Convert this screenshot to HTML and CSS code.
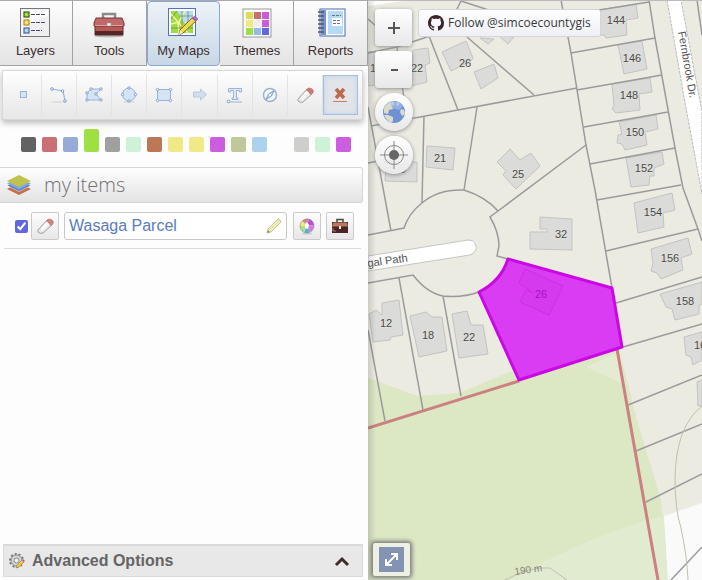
FILE: index.html
```html
<!DOCTYPE html>
<html lang="en">
<head>
<meta charset="utf-8">
<meta name="viewport" content="width=device-width, initial-scale=1">
<title>My Maps</title>
<link rel="stylesheet" href="styles.css">
</head>
<body>
<aside class="panel">
  <nav class="tabs">
    <button class="tab" type="button">
      <svg width="32" height="32" viewBox="0 0 32 32"><rect x="1.5" y="1.5" width="29" height="28" fill="#f0f0f2" stroke="#777" /><path d="M3 3h26v6Q14 13 3 27z" fill="#fff" opacity=".8"/><g stroke-width="1.2"><rect x="5" y="5" width="5" height="5" fill="#9fe03c" stroke="#3c5a1c"/><rect x="5" y="13" width="5" height="5" fill="#f6e67c" stroke="#b58a1c"/><rect x="5" y="21" width="5" height="5" fill="#b5d8f7" stroke="#45649c"/></g><path d="M12 7.500h15M12 15.500h15M12 23.500h11" stroke="#454b66" stroke-dasharray="4 1"/></svg>
      <span>Layers</span>
    </button>
    <button class="tab" type="button">
      <svg width="32" height="32" viewBox="0 0 32 32"><ellipse cx="16" cy="29" rx="15" ry="1.500" fill="#bbb"/><path d="M10 11V7h12v4" fill="none" stroke="#8b8b8f" stroke-width="2.500"/><path d="M3 11h26l2 5v3H1v-3z" fill="#c0696a" stroke="#713738"/><path d="M2 19h28v9H2z" fill="#b65a58" stroke="#622c2c"/><path d="M2 24h28v4H2z" fill="#552527"/><path d="M2 18.500h28" stroke="#e5a09b"/><rect x="14" y="16" width="4" height="3" fill="#eee" stroke="#999" stroke-width=".5"/></svg>
      <span>Tools</span>
    </button>
    <button class="tab tab-active" type="button">
      <svg width="32" height="32" viewBox="0 0 32 32"><rect x="1.500" y="1.500" width="27" height="27" fill="#fff" stroke="#5471b4"/><path d="M4 4h22v22H4z" fill="#9bdb45"/><path d="M10 4h16v9l-8 4z" fill="#b8dcf6"/><path d="M4 7l7 8 1 11M4 17l8-2 6-11M11 15l10 11" fill="none" stroke="#f5f2a0" stroke-width="1.500"/><path d="M4 12l6-8M15 4v22M21 4v14M4 21h22M12 9h14" fill="none" stroke="#638b52" stroke-width=".7"/><path d="M12 28l1-5L25 11l4 3-13 12z" fill="#f0d84b" stroke="#7c6829"/><path d="M25 11l3-2 3 3-2 2z" fill="#c45cce" stroke="#80558e" stroke-width=".6"/><path d="M12 28l1-5 3 3z" fill="#f9e7ba"/></svg>
      <span>My Maps</span>
    </button>
    <button class="tab" type="button">
      <svg width="32" height="32" viewBox="0 0 32 32"><rect x="2" y="2" width="28" height="28" fill="#fff" stroke="#999"/><path d="M5 5h7v7H5z" fill="#dfdb52"/><path d="M13 5h7v7h-7z" fill="#ca6d70"/><path d="M21 5h7v7h-7zM21 13h7v7h-7z" fill="#cb5bdc"/><path d="M5 13h7v7H5z" fill="#efe981"/><path d="M13 13h7v7h-7z" fill="#eee"/><path d="M5 21h7v7H5z" fill="#9be044"/><path d="M13 21h7v7h-7z" fill="#95b9e8"/><path d="M21 21h7v7h-7z" fill="#6268df"/></svg>
      <span>Themes</span>
    </button>
    <button class="tab" type="button">
      <svg width="32" height="32" viewBox="0 0 32 32"><rect x="5" y="2" width="25" height="27" fill="#fff" stroke="#486ab5"/><path d="M6 3h5v25H6z" fill="#7193d5"/><path d="M13 4h15v23H13z" fill="#b4daf4"/><path d="M17 11h10v8H17z" fill="#fff"/><path d="M17 8.500h9M18 13.500h8M18 16.500h8" stroke="#69748c" stroke-dasharray="3 1"/><path d="M3 5h6M3 9h6M3 13h6M3 17h6M3 21h6M3 25h6" stroke="#555" stroke-width="1.500"/></svg>
      <span>Reports</span>
    </button>
  </nav>

  <div class="toolbar">
    <button class="tool" type="button" aria-label="Point"><svg width="20" height="20" viewBox="0 0 20 20"><rect x="6.500" y="6.500" width="6" height="6" fill="#d5e5f5" stroke="#9cb2dc"/></svg></button>
    <button class="tool" type="button" aria-label="Line"><svg width="20" height="20" viewBox="0 0 20 20"><ellipse cx="9" cy="17" rx="7" ry="1" fill="#ddd"/><path d="M3 4l11 2 2 10" fill="none" stroke="#9cb2dc" stroke-width="1.200"/><g fill="#fff" stroke="#819fd2"><circle cx="3" cy="4" r="1.300"/><circle cx="13.500" cy="6" r="1.300"/><circle cx="16" cy="16" r="1.300"/></g></svg></button>
    <button class="tool" type="button" aria-label="Polygon"><svg width="20" height="20" viewBox="0 0 20 20"><path d="M7 4h10l-5 5 5 6H3V8z" fill="#d5e4f2" stroke="#9cb2dc"/><g fill="#fff" stroke="#819fd2"><circle cx="7" cy="4" r="1.200"/><circle cx="17" cy="4" r="1.200"/><circle cx="12" cy="9" r="1.200"/><circle cx="17" cy="15" r="1.200"/><circle cx="3" cy="15" r="1.200"/><circle cx="3" cy="8" r="1.200"/></g></svg></button>
    <button class="tool" type="button" aria-label="Circle"><svg width="20" height="20" viewBox="0 0 20 20"><ellipse cx="10" cy="17" rx="6" ry="1" fill="#ddd"/><circle cx="10" cy="9.500" r="6.500" fill="#d5e4f2" stroke="#9cb2dc"/><g fill="#fff" stroke="#819fd2"><circle cx="10" cy="3" r="1.200"/><circle cx="16.500" cy="9.500" r="1.200"/><circle cx="10" cy="16" r="1.200"/><circle cx="3.500" cy="9.500" r="1.200"/></g></svg></button>
    <button class="tool" type="button" aria-label="Rectangle"><svg width="20" height="20" viewBox="0 0 20 20"><path d="M3.500 4.500h13v11h-13z" fill="#d5e4f2" stroke="#9cb2dc"/><g fill="#fff" stroke="#819fd2"><circle cx="3.500" cy="4.500" r="1.200"/><circle cx="16.500" cy="4.500" r="1.200"/><circle cx="16.500" cy="15.500" r="1.200"/><circle cx="3.500" cy="15.500" r="1.200"/></g></svg></button>
    <button class="tool" type="button" aria-label="Arrow"><svg width="20" height="20" viewBox="0 0 20 20"><path d="M3.500 7h7V4l6 5.500-6 5.500v-3h-7z" fill="#d1dfec" stroke="#b9cae0"/></svg></button>
    <button class="tool" type="button" aria-label="Text"><svg width="20" height="20" viewBox="0 0 20 20"><path d="M3.500 7V3.500h13V7h-2V5.500h-3V13H13v1.500H7V13h1.500V5.500h-3V7z" fill="#dce9f6" stroke="#9cb2dc"/><path d="M3 17h14" stroke="#9cb2dc"/><circle cx="3.500" cy="16.500" r="1.300" fill="#fff" stroke="#819fd2"/></svg></button>
    <button class="tool" type="button" aria-label="Compass"><svg width="20" height="20" viewBox="0 0 20 20"><circle cx="10" cy="10" r="6.500" fill="#f5f8fc" stroke="#9db4d7" stroke-width="1.500"/><path d="M14 5.500L11.500 11 6 14.500 8.500 9z" fill="#c2d4ec" stroke="#829fcc"/><circle cx="10" cy="10" r="1" fill="#fff"/></svg></button>
    <button class="tool" type="button" aria-label="Eraser"><svg width="20" height="20" viewBox="0 0 20 20"><path d="M3 14L12 4q2-2 5 0t0 5l-9 8q-3 1-5-1z" fill="#e9e9e9" stroke="#a0a0a0"/><path d="M11 5l1-1q2-2 5 0t0 5l-1 1z" fill="#ce7775"/><path d="M6 12l6-6 2 2-7 7z" fill="#fff"/></svg></button>
    <button class="tool tool-active" type="button" aria-label="Clear drawing"><svg width="20" height="20" viewBox="0 0 20 20"><path d="M6 4l8 9M14 4l-8 9" stroke="#bd6849" stroke-width="3.500"/><path d="M3 16.500h14" stroke="#d17a56"/></svg></button>
  </div>

  <div class="swatches">
    <button class="swatch dark" type="button" aria-label="Dark grey"></button>
    <button class="swatch red" type="button" aria-label="Red"></button>
    <button class="swatch blue" type="button" aria-label="Blue"></button>
    <button class="swatch green chosen" type="button" aria-label="Green"></button>
    <button class="swatch grey" type="button" aria-label="Grey"></button>
    <button class="swatch mint" type="button" aria-label="Mint"></button>
    <button class="swatch brown" type="button" aria-label="Brown"></button>
    <button class="swatch yellow" type="button" aria-label="Yellow"></button>
    <button class="swatch yellow" type="button" aria-label="Light yellow"></button>
    <button class="swatch purple" type="button" aria-label="Purple"></button>
    <button class="swatch olive" type="button" aria-label="Olive"></button>
    <button class="swatch sky" type="button" aria-label="Sky blue"></button>
    <button class="swatch silver recent" type="button" aria-label="Recent silver"></button>
    <button class="swatch mint" type="button" aria-label="Recent mint"></button>
    <button class="swatch purple" type="button" aria-label="Recent purple"></button>
  </div>

  <h1 class="heading">
    <svg width="26" height="22" viewBox="0 0 26 22"><path d="M1 15l12-6 12 6-12 6z" fill="#c66f4b"/><path d="M1 11.500l12-6 12 6-12 6z" fill="#5c7ec0" stroke="#fff" stroke-width=".5"/><path d="M1 9.500l12-6 12 6-12 6z" fill="#82a9dc"/><path d="M1 7l12-6 12 6-12 6z" fill="#bfc34b"/></svg>
    <span>my items</span>
  </h1>

  <div class="item">
    <input class="item-check" type="checkbox" checked aria-label="Show Wasaga Parcel">
    <button class="square" type="button" aria-label="Delete item"><svg width="20" height="20" viewBox="0 0 20 20"><path d="M3 14L12 4q2-2 5 0t0 5l-9 8q-3 1-5-1z" fill="#e9e9e9" stroke="#a0a0a0"/><path d="M11 5l1-1q2-2 5 0t0 5l-1 1z" fill="#ce8280"/><path d="M6 12l6-6 2 2-7 7z" fill="#fff"/></svg></button>
    <label class="name">
      <input class="name-input" type="text" value="Wasaga Parcel" aria-label="Item name">
      <svg width="16" height="16" viewBox="0 0 16 16"><path d="M1 15l1-4L12 1q2 0 3 3L5 14z" fill="#eef0b4" stroke="#c2c49a"/><path d="M4 12l9-9" stroke="#dde2a8"/><path d="M1 15l1-3 2 2z" fill="#8b8b78"/></svg>
    </label>
    <button class="square" type="button" aria-label="Item colour"><svg width="18" height="18" viewBox="0 0 18 18"><ellipse cx="9" cy="16.500" rx="5" ry="1" fill="#ccc"/><circle cx="9" cy="9" r="7" fill="#fff"/><path d="M9 9L4 4q3-3 7-2z" fill="#d08a8b"/><path d="M9 9l2-7q4 1 5 6z" fill="#b74ee0"/><path d="M9 9l7-1q0 5-4 7z" fill="#d978db"/><path d="M9 9l3 6q-3 2-6 0z" fill="#58afd6"/><path d="M9 9l-3 6q-4-2-4-6z" fill="#a6e47c"/><path d="M9 9H2q0-3 2-5z" fill="#edea79"/><path d="M9 5l2 3-1 4-3-1V7z" fill="#fff"/><circle cx="9" cy="9" r="7" fill="none" stroke="#8c7d9c" stroke-width=".6"/></svg></button>
    <button class="square" type="button" aria-label="Item tools"><svg width="18" height="18" viewBox="0 0 18 18"><path d="M6 5V2.500h6V5" fill="none" stroke="#444" stroke-width="1.500"/><path d="M1 5h16v11H1z" fill="#4a2527"/><path d="M2 5.500h14l1 4H1z" fill="#be765c"/><path d="M2 11v3h3" fill="none" stroke="#bb7659"/><rect x="8" y="9" width="2" height="3" fill="#eee"/></svg></button>
  </div>

  <button class="advanced" type="button">
    <svg width="18" height="18" viewBox="0 0 18 18"><circle cx="8.500" cy="8.500" r="6.500" fill="none" stroke="#777" stroke-width="2" stroke-dasharray="2 2"/><circle cx="8.500" cy="8.500" r="5.500" fill="#d5d5d5" stroke="#888"/><circle cx="8.500" cy="8.500" r="2.500" fill="#eee" stroke="#888"/><path d="M8 16l1-3 5-5 2 2-5 5z" fill="#edc643" stroke="#9f8040" stroke-width=".6"/><path d="M14 8l1-1 2 2-1 1z" fill="#b45bc2"/></svg>
    <span class="advanced-label">Advanced Options</span>
    <svg width="16" height="12" viewBox="0 0 16 12"><path d="M2 10l6-6 6 6" fill="none" stroke="#432b2d" stroke-width="3"/></svg>
  </button>
</aside>

<main class="map">
  <svg class="map-canvas" viewBox="368 0 334 580" preserveAspectRatio="xMinYMin slice">
    <rect x="368" width="334" height="580" fill="#ecebe2"/>
    <path d="M368 378L417 396 460 393 519 368 619 349 637 420 661 500 668 580H368z" fill="#dce7c4"/>
    <path d="M586 367L620 351 625 385z" fill="#e4ebd2"/>
    <path d="M510 580Q590 535 664 515L668 580z" fill="#e1ebd0"/>
    <path d="M664 516L702 503V580H668z" fill="#fafafa"/>
    <path d="M368 0h42L368 6z" fill="#fff"/>
    <path d="M667 0h14l21 112v82L684 97z" fill="#fff" stroke="#bbb" stroke-dasharray="3 1"/>
    <path d="M368 256L468 240q7 0 8 6t-6 9L368 271z" fill="#fff" stroke="#c5c5c3"/>
    <g class="building">
      <path d="M442 52l24-11 7 17-2 3-20 10zM474 72l20-8 4 14-17 11zM413 50l15-2 2 15-5 2 2 17-16 4zM368 52l8-1v34l-8 1zM386 162h31v20l-32-1zM427 146l28 2-2 22-27-3z"/>
      <path d="M497 162l13-13 10 11 11-7 9 13-24 23-13-14 3-4zM530 232h17v-3h-7v-12l32 2v31l-42-1zM480 38l8 6 6-5zM499 36l9 8 6-7z"/>
      <path d="M599 10l37-6 2 14-12 2 1 15-21 3-2-3h-4zM618 45l24-4 5 28-23 5zM612 84l38-6 2 14-13 2 1 16-24 3-4-4 2-4zM619 122l37-7 2 14-13 3 2 13-22 5-3-6-5-1 1-8 4-1zM626 158l36-6 2 12-10 4v8h-4l-1 9-18 2z"/>
      <path d="M634 203l38-10 3 17-12 3 1 14-26 6zM651 249l37-11 4 16-11 4 2 12-22 9-4-6-6-2 2-8zM660 294l42-12v22l-3 2v8l-24 6-3-11-6-2zM684 337l18-5v28l-9 5-2-8-5-2z"/>
      <path d="M369 314l7-4 6 5v-12l17-3 4 35-12 2-1 3-17 2zM410 316l16-4 6 5h10l5 34-28 6zM452 314l15-3 4 14h12l5 29-29 4zM697 382l5-2v26h-4z"/>
    </g>
    <g class="parcel">
      <path d="M368 19l9 8M368 53L397 47 430 36M461 1l-7 14M461 1l40 13M429 36l29 74M467 37l67 58M371 126L458 110 577 88M397 47l7 52M368 107l23 124M424 116l-2 87M477 107l-13 83M368 163l10-2"/>
      <path d="M368 235l36-7q5-15 18-25 16-14 42-13 22 7 34 21l88-66M498 211l-8 6q9 15 9 29l-2 10 11 3M368 283l45-8q14 18 30 21 19 2 36-4M399 278l24 132M443 296l18 100M368 330l17 91"/>
      <path d="M561 0l10 53 15 92 9 45 17 98 10 59M649 0l6 38 20 110 8 40 15 41 4 12M599 10l50-8M571 53l84-15M577 90l85-15M584 127l84-15M590 164l85-16M597 200l84-15M606 251l92-22M616 303l86-26M623 347l79-23M628 405l74-30M636 451l66-27M646 502l56-28M671 580l31-33M697 0l5 35"/>
    </g>
    <path class="contour" d="M702 406q-26 20-27 72 0 32 6 50 6 28 7 52M505 580q26-14 45-12l17 12"/>
    <path class="boundary" d="M368 428L519 381M617 349L658 580"/>
    <g class="number">
      <text x="465" y="67">26</text><text x="417" y="72">22</text><text x="373" y="72">1</text><text x="440" y="162">21</text><text x="403" y="173">9</text><text x="518" y="178">25</text><text x="561" y="238">32</text><text x="616" y="24">144</text><text x="632" y="62">146</text><text x="629" y="99">148</text><text x="635" y="136">150</text><text x="644" y="172">152</text><text x="653" y="216">154</text><text x="670" y="262">156</text><text x="685" y="305">158</text><text class="edge" x="694" y="349">16</text><text x="386" y="327">12</text><text x="428" y="339">18</text><text x="469" y="341">22</text>
    </g>
    <text class="street" transform="translate(368 267) rotate(-8)">gal Path</text>
    <text class="street" transform="translate(678 32) rotate(80)">Fernbrook Dr.</text>
    <text class="contour-label" transform="translate(515 575) rotate(-8)">190 m</text>
    <path class="selected" d="M508 259L612 288 622 347 519 380 479 292Q501 281 508 259z"/>
    <path class="covered" d="M525 269l38 17-14 29-29-13 6-12 7 3-14-10z"/>
    <text x="541" y="298" class="selected-number">26</text>
  </svg>

  <div class="controls">
    <button class="zoom" type="button" aria-label="Zoom in"><svg width="14" height="14" viewBox="0 0 14 14"><path d="M7 1v12M1 7h12" stroke="#555" stroke-width="2"/></svg></button>
    <button class="zoom" type="button" aria-label="Zoom out"><svg width="14" height="14" viewBox="0 0 14 14"><path d="M4 7h7" stroke="#555" stroke-width="2"/></svg></button>
    <button class="zoom round" type="button" aria-label="Full extent"><svg width="24" height="24" viewBox="0 0 24 24"><circle cx="12" cy="12" r="11" fill="#6f91d3"/><path d="M2 8q3-6 9-7l2 3-3 2 1 3-4 1-1 4-4-1zM6 15l5 2v4l-2 2q-5-3-7-8zM15 2l3 1-2 3-2-1zM19 9l3 1 1 4-3 2-2-4z" fill="#dbdccb"/><path d="M8 2Q16 0 21 6l-4 4-7-2z" fill="#a9c0ef" opacity=".65"/></svg></button>
    <button class="zoom round" type="button" aria-label="My location"><svg width="28" height="28" viewBox="0 0 28 28"><circle cx="14" cy="14" r="9.500" fill="none" stroke="#888"/><path d="M14 0v28M0 14h28" stroke="#888"/><circle cx="14" cy="14" r="5" fill="#666"/></svg></button>
  </div>

  <a class="follow" href="#follow">
    <svg width="16" height="16" viewBox="0 0 16 16"><path fill="#3b2528" fill-rule="evenodd" d="M8 0C3.580 0 0 3.580 0 8c0 3.540 2.290 6.530 5.470 7.590.4.070.55-.17.55-.38 0-.19-.01-.82-.01-1.490-2.010.37-2.530-.49-2.690-.94-.09-.23-.48-.94-.82-1.130-.28-.15-.68-.52-.01-.53.63-.01 1.080.58 1.230.82.72 1.210 1.870.87 2.330.66.070-.52.280-.87.510-1.070-1.780-.2-3.640-.89-3.640-3.950 0-.87.310-1.590.82-2.150-.08-.2-.36-1.020.08-2.120 0 0 .67-.21 2.200.82.640-.18 1.320-.27 2-.27s1.360.09 2 .27c1.530-1.040 2.200-.82 2.200-.82.440 1.100.160 1.920.080 2.120.510.560.820 1.270.820 2.150 0 3.070-1.870 3.750-3.650 3.950.290.250.540.730.540 1.480 0 1.070-.01 1.930-.01 2.200 0 .21.150.460.550.380A8.010 8.010 0 0016 8c0-4.420-3.580-8-8-8z"/></svg>
    <span>Follow @simcoecountygis</span>
  </a>

  <button class="expand" type="button" aria-label="Full screen"><svg width="25" height="25" viewBox="0 0 25 25"><path d="M0 0h25v25H0z" fill="#8493b3"/><path d="M8 17l9-9M12 7h6v6M7 12v6h6" fill="none" stroke="#fff" stroke-width="2"/></svg></button>
</main>
</body>
</html>
```
FILE: styles.css
```css
* { box-sizing: border-box; }

body {
  margin: 0;
  display: flex;
  min-height: 100vh;
  background: #fdfdfd;
  font-family: "Liberation Sans", Arial, sans-serif;
}

button { margin: 0; padding: 0; font: inherit; cursor: pointer; }
svg { display: block; flex: none; }

.panel {
  flex: 0 0 368px;
  min-width: 0;
  display: flex;
  flex-direction: column;
}

.tabs {
  display: grid;
  grid-template-columns: repeat(5, minmax(0, 1fr));
  height: 66px;
  margin-left: -1px;
  border-top: 1px solid #aaa;
}
.tab {
  display: flex;
  flex-direction: column;
  align-items: center;
  gap: 2px;
  padding-top: 6px;
  border: 0;
  border-right: 1px solid #a2a29f;
  border-bottom: 1px solid #a2a29f;
  background: linear-gradient(#fdfdfd, #e4e4e4);
  color: #3c2d30;
  font: 13px/20px "Liberation Sans", Arial, sans-serif;
}
.tab-active {
  border: 1px solid #8ca7d3;
  border-radius: 4px;
  padding-top: 5px;
  background: linear-gradient(#edf3f8, #c8d7e6);
}

.toolbar {
  display: grid;
  grid-template-columns: repeat(10, minmax(0, 1fr));
  margin: 4px 5px 0 2px;
  padding: 4px;
  height: 50px;
  border: 1px solid #d8d8d6;
  background: linear-gradient(#fefefe, #e7e7e7);
  box-shadow: 0 3px 6px #bbb;
}
.tool {
  display: grid;
  place-items: center;
  border: 0;
  border-right: 1px solid #e3e3e3;
  background: none;
}
.tool-active {
  border: 1px solid #a7bde2;
  background: #e1e4e8;
  box-shadow: inset 0 0 4px #b8d0f0;
}

.swatches {
  display: flex;
  align-items: flex-end;
  gap: 6px;
  height: 32px;
  padding-left: 21px;
}
.swatch { width: 15px; height: 15px; border: 0; border-radius: 2px; }
.chosen { height: 23px; }
.recent { margin-left: 21px; }
.dark { background: #626263; }
.red { background: #ca7074; }
.blue { background: #98abd8; }
.green { background: #9de044; }
.grey { background: #a0a0a0; }
.mint { background: #cef2d8; }
.brown { background: #bc7856; }
.yellow { background: #f1e985; }
.purple { background: #cb5edf; }
.olive { background: #bfc79c; }
.sky { background: #abd3ee; }
.silver { background: #cececd; }

.heading {
  display: flex;
  align-items: center;
  gap: 12px;
  height: 36px;
  margin: 15px 5px 0 0;
  padding-left: 6px;
  border: 1px solid #d5d5d5;
  border-left: 0;
  border-radius: 0 3px 3px 0;
  background: linear-gradient(#fefefe, #e3e3e3);
  color: #707072;
  font: 300 20px/24px "Open Sans", sans-serif;
}

.item {
  display: flex;
  align-items: center;
  gap: 5px;
  margin: 0 7px 0 4px;
  padding: 9px 7px 8px 11px;
  border-bottom: 1px solid #dcdcdc;
}
.item-check { width: 13px; height: 13px; margin: 0; accent-color: #5f66de; }
.square {
  display: grid;
  place-items: center;
  flex: none;
  width: 28px;
  height: 28px;
  border: 1px solid #cbcbcb;
  border-radius: 2px;
  background: linear-gradient(#fdfdfd, #e7e7e7);
}
.item-check + .square { margin-left: -2px; }
.name {
  display: flex;
  align-items: center;
  flex: 1;
  min-width: 0;
  height: 28px;
  margin-right: 1px;
  padding: 0 4px;
  border: 1px solid #c8c8c8;
  border-radius: 3px;
  background: #fff;
}
.name-input {
  flex: 1;
  min-width: 0;
  padding: 0;
  border: 0;
  outline: 0;
  background: none;
  color: #5b7cbc;
  font: 16px/20px "Liberation Sans", Arial, sans-serif;
}

.advanced {
  display: flex;
  align-items: center;
  gap: 6px;
  height: 33px;
  margin: auto 5px 3px 3px;
  padding: 0 12px 0 4px;
  border: 1px solid #dadada;
  border-top-width: 2px;
  background: #e8e8e8;
  color: #656565;
  font: bold 16px/20px "Liberation Sans", Arial, sans-serif;
}
.advanced-label { flex: 1; text-align: left; }

.map {
  position: relative;
  flex: 1;
  min-width: 0;
  overflow: hidden;
  border-top: 1px solid #bbb;
  background: #ecebe2;
}
.map-canvas {
  position: absolute;
  top: -1px;
  left: 0;
  width: 100%;
  height: 100vh;
}
.map::after {
  content: "";
  position: absolute;
  inset: 0 auto 0 0;
  width: 8px;
  background: linear-gradient(90deg, #0002, #0000);
  pointer-events: none;
}
.building { fill: #dbdbda; stroke: #c3c3c3; }
.parcel { fill: none; stroke: #9b9b9d; stroke-width: 1.5px; }
.contour { fill: none; stroke: #c0c0ae; }
.boundary { fill: none; stroke: #cc8082; stroke-width: 3px; }
.selected { fill: #d93cf3; stroke: #cb08e3; stroke-width: 3px; stroke-linejoin: round; }
.covered { fill: #d63aef; stroke: #cb30e2; }
.number, .selected-number { fill: #484848; font-size: 11px; text-anchor: middle; }
.number { stroke: #e4e4de; stroke-width: 1px; paint-order: stroke; }
.number .edge { text-anchor: start; }
.selected-number { fill: #a50fc5; }
.street { fill: #505050; font: 11px "Liberation Sans", Arial, sans-serif; }
.contour-label { fill: #85857b; font-size: 10px; }

.controls {
  position: absolute;
  z-index: 1;
  top: 8px;
  left: 7px;
  display: flex;
  flex-direction: column;
  gap: 5px;
}
.zoom {
  display: grid;
  place-items: center;
  width: 37px;
  height: 37px;
  border: 0;
  border-radius: 4px;
  background: linear-gradient(#fefefe, #e8e8e8);
  box-shadow: 0 1px 4px #888;
}
.round { width: 38px; height: 38px; border-radius: 50%; }

.follow {
  position: absolute;
  z-index: 1;
  top: 8px;
  left: 50px;
  display: flex;
  align-items: center;
  gap: 4px;
  height: 28px;
  padding: 0 9px;
  border: 1px solid #d5d5d9;
  border-radius: 3px;
  background: linear-gradient(#fefefe, #eff0f5);
  color: #38383c;
  font: 500 12px/20px "Open Sans", sans-serif;
  text-decoration: none;
  white-space: nowrap;
}

.expand {
  position: absolute;
  z-index: 1;
  bottom: 4px;
  left: 5px;
  display: grid;
  place-items: center;
  width: 37px;
  height: 33px;
  border: 0;
  border-radius: 2px;
  background: #eef0e4;
  box-shadow: 0 0 4px 2px #777;
}
```
